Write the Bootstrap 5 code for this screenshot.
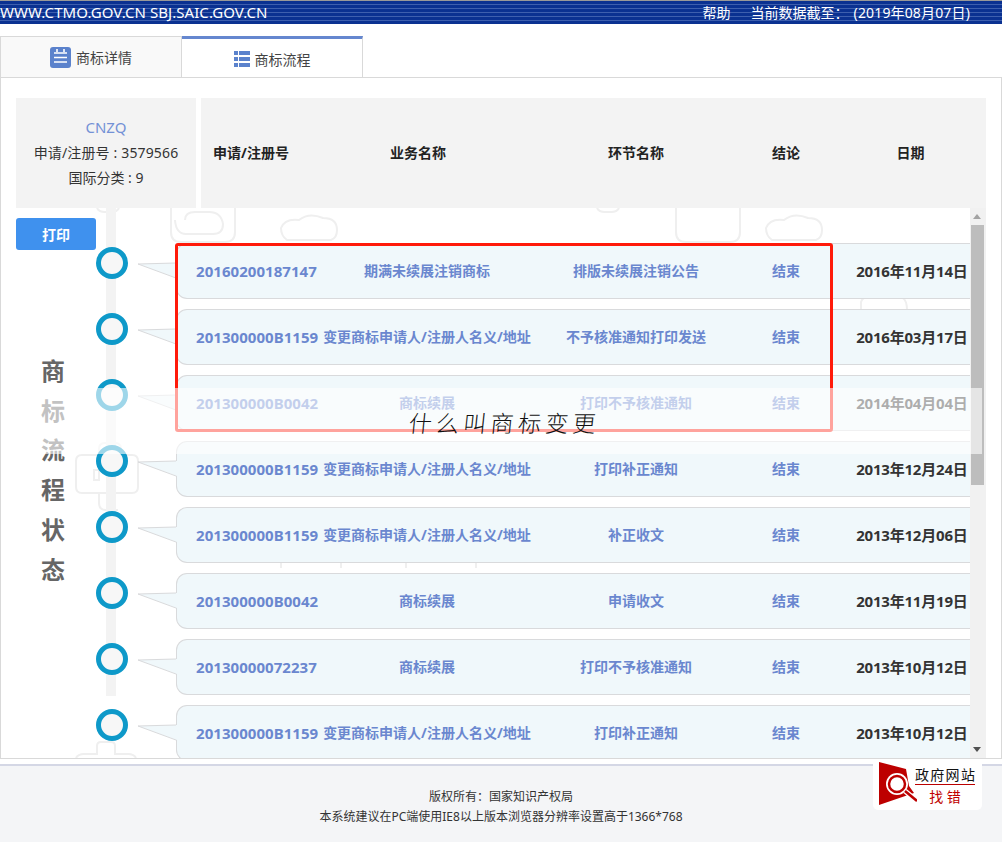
<!DOCTYPE html>
<html lang="zh-CN">
<head>
<meta charset="utf-8">
<title>商标流程</title>
<link href="https://cdn.jsdelivr.net/npm/bootstrap@5.3.0/dist/css/bootstrap.min.css" rel="stylesheet">
<style>
html,body{height:842px;overflow:hidden}
body{font-family:"Noto Sans","Noto Sans CJK SC",sans-serif;font-size:14px;color:#333;background:#fff;position:relative}
.topbar{height:24px;border-top:1px solid #999;color:#fff;font-size:14px;line-height:23px;background:repeating-linear-gradient(180deg,#0a3191 0,#0a3191 3px,#3d5fae 3px,#3d5fae 4px);padding-right:32px}
.topurl{font-size:15px;white-space:nowrap;letter-spacing:.06px}
.topright{gap:20px}
.datepart{margin-left:5px;letter-spacing:.15px}
.tabstrip{margin-top:12px;height:41px}
.tabcell{width:182px;height:41px;border:1px solid #d9d9d9;border-bottom:0;background:#f9f9f9;color:#444;gap:5px}
.tabcell+.tabcell{width:181px;border-left:0;border-top:3px solid #6587cf;background:#fff;padding-top:2px}
.mainpanel{height:682px;border:1px solid #d9d9d9;padding:20px 15px 0 15px;overflow:hidden}
.infobox{width:180px;height:110px;background:#f3f3f3;color:#333;line-height:25px;padding-bottom:2px}
.infoname{color:#7391d6;font-size:15px}
.infonum{letter-spacing:.15px}
.headbox{width:785px;height:110px;background:#f3f3f3;margin-left:5px;font-weight:700;color:#222;line-height:110px;text-align:center;white-space:nowrap}
.hc1{width:100px}.hc2{width:234px}.hc3{width:202px}.hc4{width:98px}.hc5{width:151px}
.printbtn{width:80px;height:32px;background:#3f91ee;color:#fff;font-weight:700;font-size:14px;border:0;border-radius:3px;padding:0;margin-top:10px;--bs-btn-hover-bg:#3f91ee}
.scrollzone{height:550px;position:relative;overflow:hidden}
.leftcol{width:80px;flex:none}
.vtext{margin-top:101px;width:74px;text-align:center;font-size:24px;font-weight:700;color:#666;line-height:39.7px}
.timeline{width:874px;flex:none;position:relative;padding-top:35px}
.rail{position:absolute;left:10px;top:0;width:10px;height:488px;background:#f3f3f3}
.stepline{height:56px;margin-bottom:10px;position:relative}
.dot{width:32px;height:32px;flex:none;border:5px solid #0e99c9;border-radius:50%;background:#f7f7f7;margin-top:4px}
.tail{width:49px;height:56px;flex:none;margin-right:-1px;position:relative;z-index:1}
.bubble{width:795px;height:56px;flex:none;background:#f0f8fb;border:1px solid #d9dadc;border-radius:11px 0 0 11px;border-right:0;line-height:54px;color:#6a87cf;font-weight:700;white-space:nowrap}
.c1{width:146px;padding-left:19px;font-size:15px;letter-spacing:.05px}
.c2{width:208.5px;text-align:center;font-size:14px}
.c3{width:210px;text-align:center}
.c4{width:90.5px;text-align:center}
.c5{width:140px;padding-left:25px;color:#333;font-size:15px;letter-spacing:-.2px}
.scrolltrack{position:absolute;right:0;top:0;width:16px;height:550px;background:#f1f1f1}
.thumb{position:absolute;left:1px;top:17px;width:13px;height:260px;background:#bdbdbd}
.arrowup,.arrowdown{position:absolute;left:3px;width:0;height:0;border-left:4px solid transparent;border-right:4px solid transparent}
.arrowup{top:6px;border-bottom:5px solid #a3a3a3}
.arrowdown{bottom:6px;border-top:5px solid #505050}
.wm{position:absolute;left:0;top:0;width:970px;height:550px}
.redframe{position:absolute;left:175px;top:243px;width:658px;height:189px;border:3px solid #ff1a0a;border-radius:3px;z-index:3}
.veil{position:absolute;left:1px;top:388px;width:981px;height:66px;background:rgba(255,255,255,.6);z-index:4}
.scrawl{position:absolute;left:409px;top:405px;z-index:5;font-family:"Noto Sans CJK SC",sans-serif;font-weight:300;font-size:23px;line-height:34px;letter-spacing:4.3px;color:#111;white-space:nowrap;transform:skewX(-6deg)}
.pagefoot{margin-top:5px;height:78px;border-top:2px solid #d4d7e5;background:#f4f5f7;font-size:12px;line-height:20px;color:#333;padding-top:21px}
.govbadge{position:absolute;left:873px;top:762px;width:109px;height:48px;background:#fff;border-radius:0 0 5px 5px;z-index:6}
.govt{position:absolute;left:42px;top:3px;width:60px;height:20px;font-size:14px;line-height:20px;letter-spacing:1.3px;color:#111;white-space:nowrap;border-bottom:1px solid #b00}
.govr{position:absolute;left:42px;top:25px;width:60px;text-align:center;font-size:14px;line-height:20px;color:#c00000}
</style>
</head>
<body>
<div class="topbar d-flex justify-content-between">
  <span class="topurl">WWW.CTMO.GOV.CN SBJ.SAIC.GOV.CN</span>
  <span class="topright d-flex"><span>帮助</span><span>当前数据截至：<span class="datepart">(2019年08月07日)</span></span></span>
</div>
<div class="tabstrip d-flex">
  <div class="tabcell d-flex align-items-center justify-content-center">
    <svg width="21" height="21" viewBox="0 0 21 21"><rect width="21" height="21" rx="3" fill="#5b82cc"/><path d="M4 6h13M4 10.500h13M4 15h13M7 2v3M14 2v3" stroke="#fff" stroke-width="1.600"/></svg>
    <span>商标详情</span>
  </div>
  <div class="tabcell d-flex align-items-center justify-content-center">
    <svg width="16" height="16" viewBox="0 0 16 16" fill="#5b82cc"><rect width="4" height="4"/><rect x="5" width="11" height="4"/><rect y="6" width="4" height="4"/><rect x="5" y="6" width="11" height="4"/><rect y="12" width="4" height="4"/><rect x="5" y="12" width="11" height="4"/></svg>
    <span>商标流程</span>
  </div>
</div>
<div class="mainpanel">
  <div class="d-flex">
    <div class="infobox d-flex flex-column justify-content-center text-center">
      <div class="infoname">CNZQ</div>
      <div class="infonum">申请/注册号 : 3579566</div>
      <div>国际分类 : 9</div>
    </div>
    <div class="headbox d-flex">
      <span class="hc1">申请/注册号</span>
      <span class="hc2">业务名称</span>
      <span class="hc3">环节名称</span>
      <span class="hc4">结论</span>
      <span class="hc5">日期</span>
    </div>
  </div>
  <div class="scrollzone d-flex">
    <svg class="wm" viewBox="0 0 970 550" fill="none" stroke="#efefef" stroke-width="2">
      <path d="M155 0v24q0 10 10 10h44q10 0 10-10V0M169 12q0-8 10-8h14q12 0 14 12q0 10-10 10h-27q-10 0-11-14M265 20q4-10 18-8q10-8 24-2q14 0 14 12q0 8-6 10h-44q-6-4-6-12z"/>
      <path d="M81 0q2 4 8 4h6q6 0 8-4M581 0q2 4 8 4h6q6 0 8-4"/>
      <path d="M60 253q0-6 6-6h50q6 0 6 6v26q0 6-6 6h-50q-6 0-6-6zM78 262h5v10h-5zM83 247v-6q0-6 6-6h10q6 0 6 6v6M83 285v10q0 7 7 7h12"/>
      <path d="M660 0v24q0 10 10 10h44q10 0 10-10V0M750 20q4-10 18-8q10-8 24-2q14 0 14 12q0 8-6 10h-44q-6-4-6-12z"/>
      <path d="M845 102v-8q2-6 10-6h6q6-4 12-1q8-2 14 3q4 3 4 12"/>
      <path d="M265 350v10M325 350v10M268 345q10-8 20 0M300 345q10-8 20 0M390 352v8M460 352v8"/>
      <path d="M60 550q2-4 8-4h13v-8q0-4 4-4h10q4 0 4 4v8h13q6 0 8 4"/>
    </svg>
    <div class="leftcol position-relative">
      <button type="button" class="btn printbtn">打印</button>
      <div class="vtext">商<br>标<br>流<br>程<br>状<br>态</div>
    </div>
    <div class="timeline">
      <div class="rail"></div>
      <div class="stepline d-flex">
        <div class="dot position-relative"></div>
        <svg class="tail" viewBox="0 0 49 56"><path d="M10 21L49 20V35Z" fill="#f0f8fb"/><path d="M48 20L10 21L48 35" fill="none" stroke="#d9dadc"/></svg>
        <div class="bubble d-flex"><span class="c1">20160200187147</span><span class="c2">期满未续展注销商标</span><span class="c3">排版未续展注销公告</span><span class="c4">结束</span><span class="c5">2016年11月14日</span></div>
      </div>
      <div class="stepline d-flex">
        <div class="dot position-relative"></div>
        <svg class="tail" viewBox="0 0 49 56"><path d="M10 21L49 20V35Z" fill="#f0f8fb"/><path d="M48 20L10 21L48 35" fill="none" stroke="#d9dadc"/></svg>
        <div class="bubble d-flex"><span class="c1">201300000B1159</span><span class="c2">变更商标申请人/注册人名义/地址</span><span class="c3">不予核准通知打印发送</span><span class="c4">结束</span><span class="c5">2016年03月17日</span></div>
      </div>
      <div class="stepline d-flex">
        <div class="dot position-relative"></div>
        <svg class="tail" viewBox="0 0 49 56"><path d="M10 21L49 20V35Z" fill="#f0f8fb"/><path d="M48 20L10 21L48 35" fill="none" stroke="#d9dadc"/></svg>
        <div class="bubble d-flex"><span class="c1">201300000B0042</span><span class="c2">商标续展</span><span class="c3">打印不予核准通知</span><span class="c4">结束</span><span class="c5">2014年04月04日</span></div>
      </div>
      <div class="stepline d-flex">
        <div class="dot position-relative"></div>
        <svg class="tail" viewBox="0 0 49 56"><path d="M10 21L49 20V35Z" fill="#f0f8fb"/><path d="M48 20L10 21L48 35" fill="none" stroke="#d9dadc"/></svg>
        <div class="bubble d-flex"><span class="c1">201300000B1159</span><span class="c2">变更商标申请人/注册人名义/地址</span><span class="c3">打印补正通知</span><span class="c4">结束</span><span class="c5">2013年12月24日</span></div>
      </div>
      <div class="stepline d-flex">
        <div class="dot position-relative"></div>
        <svg class="tail" viewBox="0 0 49 56"><path d="M10 21L49 20V35Z" fill="#f0f8fb"/><path d="M48 20L10 21L48 35" fill="none" stroke="#d9dadc"/></svg>
        <div class="bubble d-flex"><span class="c1">201300000B1159</span><span class="c2">变更商标申请人/注册人名义/地址</span><span class="c3">补正收文</span><span class="c4">结束</span><span class="c5">2013年12月06日</span></div>
      </div>
      <div class="stepline d-flex">
        <div class="dot position-relative"></div>
        <svg class="tail" viewBox="0 0 49 56"><path d="M10 21L49 20V35Z" fill="#f0f8fb"/><path d="M48 20L10 21L48 35" fill="none" stroke="#d9dadc"/></svg>
        <div class="bubble d-flex"><span class="c1">201300000B0042</span><span class="c2">商标续展</span><span class="c3">申请收文</span><span class="c4">结束</span><span class="c5">2013年11月19日</span></div>
      </div>
      <div class="stepline d-flex">
        <div class="dot position-relative"></div>
        <svg class="tail" viewBox="0 0 49 56"><path d="M10 21L49 20V35Z" fill="#f0f8fb"/><path d="M48 20L10 21L48 35" fill="none" stroke="#d9dadc"/></svg>
        <div class="bubble d-flex"><span class="c1">20130000072237</span><span class="c2">商标续展</span><span class="c3">打印不予核准通知</span><span class="c4">结束</span><span class="c5">2013年10月12日</span></div>
      </div>
      <div class="stepline d-flex">
        <div class="dot position-relative"></div>
        <svg class="tail" viewBox="0 0 49 56"><path d="M10 21L49 20V35Z" fill="#f0f8fb"/><path d="M48 20L10 21L48 35" fill="none" stroke="#d9dadc"/></svg>
        <div class="bubble d-flex"><span class="c1">201300000B1159</span><span class="c2">变更商标申请人/注册人名义/地址</span><span class="c3">打印补正通知</span><span class="c4">结束</span><span class="c5">2013年10月12日</span></div>
      </div>
    </div>
    <div class="scrolltrack"><div class="arrowup"></div><div class="thumb"></div><div class="arrowdown"></div></div>
  </div>
</div>
<footer class="pagefoot text-center">
  <div>版权所有：国家知识产权局</div>
  <div>本系统建议在PC端使用IE8以上版本浏览器分辨率设置高于1366*768</div>
</footer>
<div class="redframe"></div>
<div class="veil"></div>
<div class="scrawl">什么叫商标变更</div>
<div class="govbadge">
  <svg class="position-absolute top-0 start-0" width="44" height="48" viewBox="0 0 44 48"><path d="M6 0L33 7L36 24L41 31L6 43Z" fill="#bd0000"/><path d="M32 29L44 39" stroke="#fff" stroke-width="5"/><circle cx="24" cy="22" r="11" fill="#fff"/><circle cx="24" cy="22" r="8" fill="#fff" stroke="#bd0000" stroke-width="2.500"/><path d="M32 29L44 39" stroke="#bd0000" stroke-width="2.500"/></svg>
  <div class="govt">政府网站</div>
  <div class="govr">找 错</div>
</div>
<script src="https://cdn.jsdelivr.net/npm/bootstrap@5.3.0/dist/js/bootstrap.bundle.min.js"></script>
</body>
</html>
